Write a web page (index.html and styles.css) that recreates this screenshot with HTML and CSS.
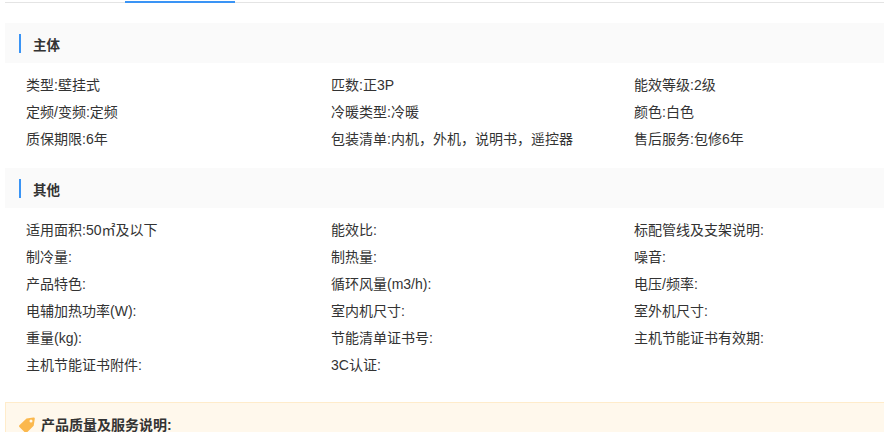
FILE: index.html
```html
<!DOCTYPE html>
<html lang="zh-CN">
<head>
<meta charset="utf-8">
<title>规格参数</title>
<link rel="stylesheet" href="styles.css">
</head>
<body>
<div class="tabs"><div class="tab-active"></div></div>
<main class="content">
  <section class="group">
    <h2 class="group-head"><span class="group-title">主体</span></h2>
    <ul class="specs">
      <li>类型:壁挂式</li><li>匹数:正3P</li><li>能效等级:2级</li>
      <li>定频/变频:定频</li><li>冷暖类型:冷暖</li><li>颜色:白色</li>
      <li>质保期限:6年</li><li>包装清单:内机，外机，说明书，遥控器</li><li>售后服务:包修6年</li>
    </ul>
  </section>
  <section class="group">
    <h2 class="group-head"><span class="group-title">其他</span></h2>
    <ul class="specs">
      <li>适用面积:50㎡及以下</li><li>能效比:</li><li>标配管线及支架说明:</li>
      <li>制冷量:</li><li>制热量:</li><li>噪音:</li>
      <li>产品特色:</li><li>循环风量(m3/h):</li><li>电压/频率:</li>
      <li>电辅加热功率(W):</li><li>室内机尺寸:</li><li>室外机尺寸:</li>
      <li>重量(kg):</li><li>节能清单证书号:</li><li>主机节能证书有效期:</li>
      <li>主机节能证书附件:</li><li>3C认证:</li>
    </ul>
  </section>
  <section class="notice">
    <svg class="notice-icon" viewBox="0 0 18 18" width="18" height="18" aria-hidden="true">
      <path fill="#fbb84d" d="M8.5 2.5 15.4 1.4c.9-.1 1.5.5 1.4 1.4L15.7 9.7 8.8 16.6c-.5.5-1.2.5-1.7 0L1.4 10.9c-.5-.5-.5-1.2 0-1.7Z"/>
      <circle cx="13" cy="5" r="1.5" fill="#fff8ec"/>
    </svg>
    <strong class="notice-title">产品质量及服务说明:</strong>
  </section>
</main>
</body>
</html>
```
FILE: styles.css
```css
* { box-sizing: border-box; }
html, body { margin: 0; padding: 0; height: 432px; overflow: hidden; background: #fff; }
body { font-family: "Liberation Sans", "Noto Sans CJK SC", sans-serif; font-size: 14px; color: #333; }
.tabs { margin-left: 5px; height: 3px; border-bottom: 1px solid #e4e4e4; position: relative; }
.tab-active { position: absolute; left: 120px; top: 1px; width: 110px; height: 2px; background: #3a94f5; }
.content { padding: 20px 0 0 5px; }
.group-head { margin: 0; height: 40px; background: #fafafa; padding-left: 14px; display: flex; align-items: center; }
.group-title { border-left: 2px solid #3a94f5; height: 19px; line-height: 23px; padding-left: 12px; font-size: 13.5px; font-weight: bold; color: #333; }
.specs { list-style: none; margin: 0; padding: 9px 0 15px 21px; display: grid; grid-template-columns: 305px 303px 1fr; grid-auto-rows: 27px; line-height: 27px; }
.notice { height: 44px; margin-top: 8px; background: #fff8ec; border: 1px solid #ffeccb; border-right: 0; padding: 12px 0 0 12px; display: flex; align-items: flex-start; gap: 5px; }
.notice-icon { flex: none; margin-top: 1px; }
.notice-title { font-size: 14px; line-height: 20px; color: #333; }
```
